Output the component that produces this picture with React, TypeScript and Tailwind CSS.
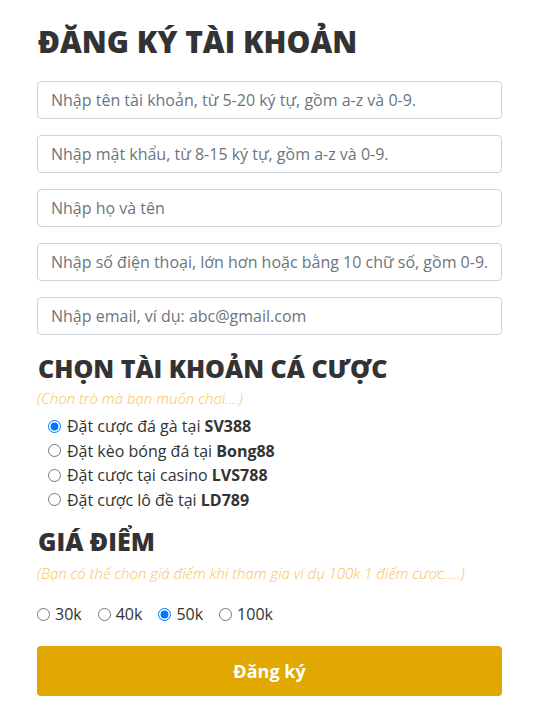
import { useState } from "react";

const fields = [
  "Nhập tên tài khoản, từ 5-20 ký tự, gồm a-z và 0-9.",
  "Nhập mật khẩu, từ 8-15 ký tự, gồm a-z và 0-9.",
  "Nhập họ và tên",
  "Nhập số điện thoại, lớn hơn hoặc bằng 10 chữ số, gồm 0-9.",
  "Nhập email, ví dụ: abc@gmail.com",
];

const games = [
  { text: "Đặt cược đá gà tại", brand: "SV388" },
  { text: "Đặt kèo bóng đá tại", brand: "Bong88" },
  { text: "Đặt cược tại casino", brand: "LVS788" },
  { text: "Đặt cược lô đề tại", brand: "LD789" },
];

const prices = ["30k", "40k", "50k", "100k"];

export default function App() {
  const [game, setGame] = useState("SV388");
  const [price, setPrice] = useState("50k");

  return (
    <div className="min-h-screen bg-white font-['Open_Sans',sans-serif] text-[#333]">
      <form className="ml-[37px] w-[465px] pt-[24px]" onSubmit={(e) => e.preventDefault()}>
        <h1 className="text-[30px] font-extrabold leading-[36px] mb-[21px] pl-[1px]">ĐĂNG KÝ TÀI KHOẢN</h1>

        <div className="flex flex-col gap-[16px]">
          {fields.map((f) => (
            <input
              key={f}
              placeholder={f}
              className="h-[38px] w-full rounded-[4px] border border-[#ced4da] px-[13px] text-[16px] text-[#495057] placeholder:text-[#6c757d] outline-none"
            />
          ))}
        </div>

        <h2 className="mt-[18px] text-[25px] font-extrabold leading-[30px] pl-[1px]">CHỌN TÀI KHOẢN CÁ CƯỢC</h2>
        <p className="mt-[5px] text-[15px] leading-[20px] font-light italic text-[#f9bf58]">(Chọn trò mà bạn muốn chơi....)</p>

        <div className="mt-[6px] flex flex-col pl-[11px]">
          {games.map((g) => (
            <label key={g.brand} className="flex items-center gap-[6px] text-[16px] leading-[24.5px]">
              <input
                type="radio"
                name="game"
                checked={game === g.brand}
                onChange={() => setGame(g.brand)}
                className="m-0 h-[13px] w-[13px] accent-[#0075ff]"
              />
              <span>
                {g.text} <b className="font-bold">{g.brand}</b>
              </span>
            </label>
          ))}
        </div>

        <h2 className="mt-[14px] text-[25px] font-extrabold leading-[30px] pl-[1px]">GIÁ ĐIỂM</h2>
        <p className="mt-[7px] text-[15px] leading-[20px] font-light italic text-[#f9bf58]">
          (Bạn có thể chọn giá điểm khi tham gia ví dụ 100k 1 điểm cược.....)
        </p>

        <div className="mt-[19px] flex items-center gap-[16px]">
          {prices.map((p) => (
            <label key={p} className="flex items-center gap-[5px] text-[16px] leading-[24px]">
              <input
                type="radio"
                name="price"
                checked={price === p}
                onChange={() => setPrice(p)}
                className="m-0 h-[13px] w-[13px] accent-[#0075ff]"
              />
              <span>{p}</span>
            </label>
          ))}
        </div>

        <button
          type="submit"
          className="mt-[20px] h-[50px] w-full rounded-[4px] bg-[#e0a800] text-[18px] font-bold text-white"
        >
          Đăng ký
        </button>
      </form>
    </div>
  );
}
